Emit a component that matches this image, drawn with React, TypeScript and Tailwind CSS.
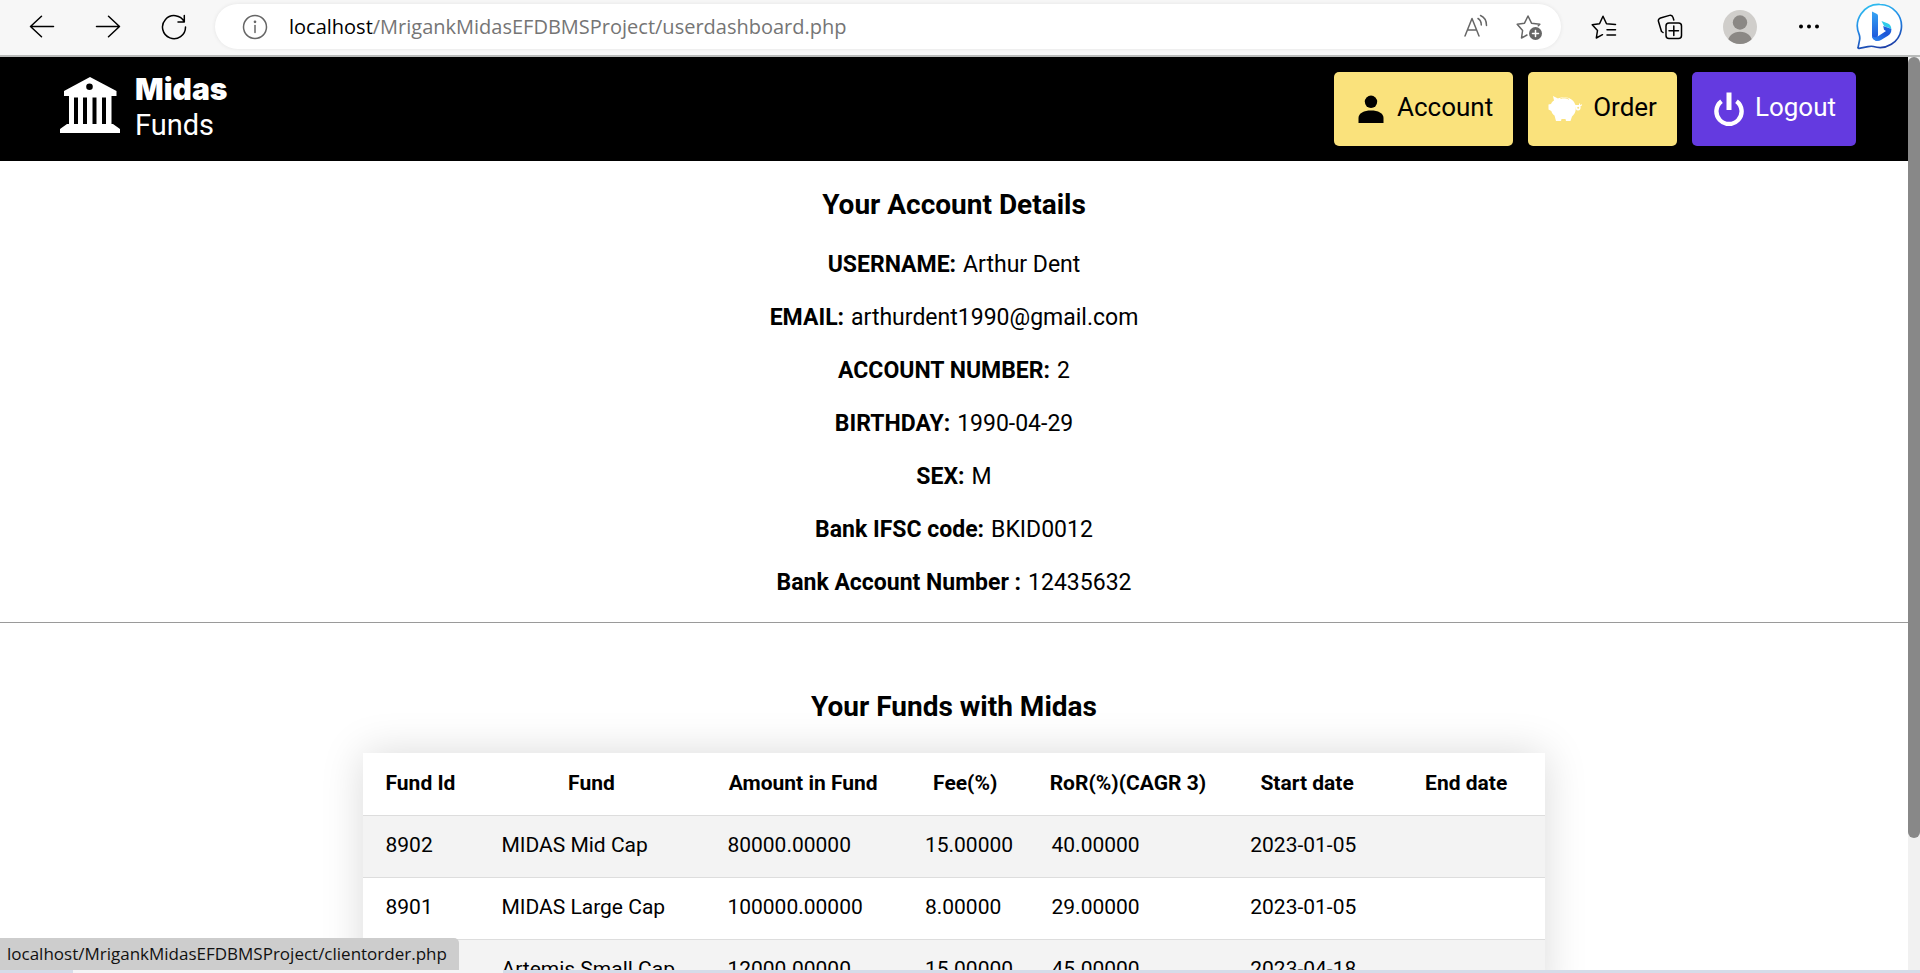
import type { ReactNode } from "react";

const details: [string, string][] = [
  ["USERNAME:", "Arthur Dent"],
  ["EMAIL:", "arthurdent1990@gmail.com"],
  ["ACCOUNT NUMBER:", "2"],
  ["BIRTHDAY:", "1990-04-29"],
  ["SEX:", "M"],
  ["Bank IFSC code:", "BKID0012"],
  ["Bank Account Number :", "12435632"],
];

const columns: [string, string][] = [
  ["Fund Id", "w-[9.8%]"],
  ["Fund", "w-[19.1%]"],
  ["Amount in Fund", "w-[16.7%]"],
  ["Fee(%)", "w-[10.7%]"],
  ["RoR(%)(CAGR 3)", "w-[16.8%]"],
  ["Start date", "w-[13.5%]"],
  ["End date", "w-[13.4%]"],
];

const funds: string[][] = [
  ["8902", "MIDAS Mid Cap", "80000.00000", "15.00000", "40.00000", "2023-01-05", ""],
  ["8901", "MIDAS Large Cap", "100000.00000", "8.00000", "29.00000", "2023-01-05", ""],
  ["", "Artemis Small Cap", "12000.00000", "15.00000", "45.00000", "2023-04-18", ""],
];

function Line({ children }: { children: ReactNode }) {
  return (
    <svg
      viewBox="0 0 26 26"
      className="size-[26px]"
      fill="none"
      stroke="currentColor"
      strokeWidth="1.5"
      strokeLinecap="round"
      strokeLinejoin="round"
      aria-hidden="true"
    >
      {children}
    </svg>
  );
}

function BingLogo() {
  return (
    <svg viewBox="0 0 48 48" className="size-12" aria-hidden="true">
      <defs>
        <linearGradient id="ring" x1="0.2" y1="0" x2="0.5" y2="1">
          <stop offset="0" stopColor="#2fc0f0" />
          <stop offset="0.5" stopColor="#2287e6" />
          <stop offset="1" stopColor="#1d3fa8" />
        </linearGradient>
        <linearGradient id="stem" x1="0" y1="0" x2="0" y2="1">
          <stop offset="0" stopColor="#36a5f4" />
          <stop offset="1" stopColor="#1d4fd8" />
        </linearGradient>
        <linearGradient id="bowl" x1="0" y1="1" x2="1" y2="0">
          <stop offset="0" stopColor="#2f8df5" />
          <stop offset="0.6" stopColor="#1d55d6" />
          <stop offset="1" stopColor="#1f6be4" />
        </linearGradient>
      </defs>
      <path
        d="M24 1.500a21.500 21.500 0 1 1-6.500 42c-2-.6-3.500-.3-5.500.1l-9 1.700c-.7.100-1.100-.3-.9-1l1.600-8c.3-1.700 0-3-.4-4.500A21.500 21.500 0 0 1 24 1.500z"
        fill="#fff"
        stroke="url(#ring)"
        strokeWidth="1.700"
      />
      <path d="M16 8.500l5 2.600c.7.400 1 .9 1 1.600V32l-1 6c-3-.5-5-2.500-5-5z" fill="url(#stem)" />
      <path d="M25.500 18l6.500 2.500c2.400 1.200 3.500 3.400 3.300 6.500-.3-1-1-1.600-2-2l-4.300-1.500c-.6-.2-.9-.5-1.200-1z" fill="#2fcdea" />
      <path d="M35.300 26c.3 3-1 5.500-3.300 6.800l-7 4.200c-3.600 2.200-8 .6-9-4 1.500 1.500 3.800 1.600 5.700.4l8.300-5.400-2-1.300-.8-3.700 5.600 1.900c1.200.2 2 .5 2.500 1.100z" fill="url(#bowl)" />
    </svg>
  );
}

function Toolbar() {
  return (
    <div className="flex h-[57px] shrink-0 items-center border-b-2 border-[#b9bbba] bg-[#f7f7f7] pb-0.5 pl-[29px] pr-4 text-black">
      <div className="flex gap-10">
        <button type="button" aria-label="Back">
          <Line><path d="M24.500 12.500H1.500M12.500 2.200L1.500 12.500l11 10.300" /></Line>
        </button>
        <button type="button" aria-label="Forward">
          <Line><path d="M1.500 12.500h23M13.500 2.200l11 10.300-11 10.300" /></Line>
        </button>
        <button type="button" aria-label="Refresh">
          <Line><path d="M23.300 8A11.500 11.500 0 1 0 24.500 13M23.300 1.500V8H17" /></Line>
        </button>
      </div>
      <div className="ml-7 flex h-[45px] flex-1 items-center rounded-full bg-white pl-[27px] pr-[19px] text-[#666] shadow-[0_0_4px_rgba(0,0,0,0.08)]">
        <Line><circle cx="13" cy="13" r="11.500" /><path d="M13 11.500v7" /><circle cx="13" cy="7.800" r=".6" fill="currentColor" /></Line>
        <p className="ml-[21px] flex-1 font-['Open_Sans',sans-serif] text-[20px] leading-7 text-[#757575]">
          <span className="text-black">localhost</span>/MrigankMidasEFDBMSProject/userdashboard.php
        </p>
        <button type="button" aria-label="Read aloud">
          <Line><path d="M2 22L9 4.500l7 17.500M4.500 16h9M15 4.500c2 1.200 3.300 3.300 3.300 6.500M17.500 1.500c3.800 1.600 6 5 6 10" /></Line>
        </button>
        <button type="button" aria-label="Add to favourites" className="ml-[27px]">
          <Line>
            <path d="M11 21l-5.500 3 1.100-7.500L1.200 10.300l7.300-1.100L12 2l3.500 7.200 8.300 1.100-1.500 1.500" />
            <circle cx="19.500" cy="19.500" r="6.500" fill="currentColor" stroke="none" />
            <path d="M19.500 16.500v6M16.500 19.500h6" stroke="#fff" />
          </Line>
        </button>
      </div>
      <div className="ml-[30px] flex items-center">
        <button type="button" aria-label="Favourites">
          <Line><path d="M11.500 20.700l-6.200 3.300 1.200-7.500L1.200 10.800l7.300-1.100L12 2.300l3.500 7.400 9 .8M16 15.800h8.500M16 21h8.500" /></Line>
        </button>
        <button type="button" aria-label="Collections" className="ml-10">
          <Line>
            <rect x="9" y="9" width="15.500" height="15.500" rx="3" />
            <path d="M16.800 12v9.500M12 16.800h9.500M6 18.500L4.500 17.500 1.500 7.500c-.5-1.600.4-3 2-3.500l9-2.600c1.800-.5 3 .3 3.500 2l.8 2.600" />
          </Line>
        </button>
        <button type="button" aria-label="Profile" className="ml-10">
          <svg viewBox="0 0 34 34" className="size-[34px]" aria-hidden="true">
            <clipPath id="avatar"><circle cx="17" cy="17" r="17" /></clipPath>
            <g clipPath="url(#avatar)">
              <rect width="34" height="34" fill="#d0cecb" />
              <circle cx="17" cy="12.500" r="7.200" fill="#8b8885" />
              <path d="M4 34c1-8 6-12.200 13-12.200S29 26 30 34z" fill="#8b8885" />
            </g>
          </svg>
        </button>
        <button type="button" aria-label="Settings and more" className="ml-[39px]">
          <Line>
            <g fill="currentColor" stroke="none"><circle cx="5" cy="12.500" r="2" /><circle cx="13" cy="12.500" r="2" /><circle cx="21" cy="12.500" r="2" /></g>
          </Line>
        </button>
        <button type="button" aria-label="Bing chat" className="ml-[34px]">
          <BingLogo />
        </button>
      </div>
    </div>
  );
}

function SiteHeader() {
  return (
    <header className="flex h-[104px] items-center justify-between bg-black pl-[60px] pr-[52px]">
      <a href="#home" className="flex items-center gap-[15px] pb-1 text-white">
        <svg viewBox="0 0 60 56" className="mb-1 h-14 w-[60px]" fill="currentColor" aria-hidden="true">
          <path fillRule="evenodd" d="M30 0l26.500 14v5H51.500v28H53l7 5v4H0v-4l7-5h2V19H4v-5zM29.500 6.500a3.300 3.300 0 1 0 0 6.600 3.300 3.300 0 0 0 0-6.600zM14 20.500V47h4V20.500zM23 20.500V47h4V20.500zM32.500 20.500V47h4V20.500zM42 20.500V47h4V20.500z" />
        </svg>
        <span className="flex flex-col">
          <span className="font-['Inter',sans-serif] text-[30px] font-black leading-9">Midas</span>
          <span className="font-['Roboto',sans-serif] text-[29px] leading-9">Funds</span>
        </span>
      </a>
      <nav className="flex gap-[15px] font-['Roboto',sans-serif] text-[26px]">
        <a href="#account" className="flex h-[74px] items-center gap-[11px] rounded-[5px] bg-[#fae27c] px-5 text-black">
          <svg viewBox="0 0 32 32" className="size-8" fill="currentColor" aria-hidden="true">
            <circle cx="17" cy="8.800" r="6.200" />
            <path d="M4.500 30v-5c0-5 5.500-7.500 12.500-7.500S29.500 20 29.500 25v5z" />
          </svg>
          <span className="pb-1">Account</span>
        </a>
        <a href="#order" className="flex h-[74px] items-center gap-[11px] rounded-[5px] bg-[#fae27c] px-5 text-black">
          <svg viewBox="0 0 34 32" className="h-8 w-[34px]" fill="#fff" aria-hidden="true">
            <path d="M5 3l5 2.500C13 3.500 22 3 26 9l1.500 3H31v-1.500h1V12l2-.8v1.300L32.500 13c.5 3-.5 4.500-2.500 4.500s-2.500-2-2-4l-.3 1c.3 5-1.700 7-3.700 9L22.500 28H18l-.5-2h-4L13 28H8l-1.500-5.500C5 21.500 4 20 3.300 18L.5 16.500v-5L3 11c.5-1.500 1.500-2.500 3-3.500z" />
            <path d="M12.500 5.500c3-1 6-.8 8.500.8" fill="none" stroke="#fae27c" strokeWidth=".9" />
            <circle cx="30.200" cy="14.700" r="1" fill="#fae27c" />
          </svg>
          <span className="pb-1">Order</span>
        </a>
        <a href="#logout" className="flex h-[74px] items-center gap-[11px] rounded-[5px] bg-[#643ae0] px-5 text-white">
          <svg viewBox="0 0 32 34" className="h-[34px] w-8" fill="none" stroke="currentColor" aria-hidden="true">
            <path d="M17 .5V18" strokeWidth="5" />
            <path d="M9.500 9.300a12.600 12.600 0 1 0 15 0" strokeWidth="4.400" />
          </svg>
          <span className="pb-1">Logout</span>
        </a>
      </nav>
    </header>
  );
}

export default function App() {
  return (
    <div className="relative flex h-screen flex-col overflow-hidden bg-white">
      <Toolbar />
      <div className="flex min-h-0 flex-1">
        <main className="min-w-0 flex-1 overflow-hidden font-['Roboto',sans-serif] text-black">
          <SiteHeader />
          <section className="pt-7 text-center">
            <h2 className="text-[28px] font-bold leading-8">Your Account Details</h2>
            <dl className="mt-7 flex flex-col gap-[21px] text-[23px] leading-8">
              {details.map(([label, value]) => (
                <div key={label} className="flex justify-center gap-[7px]">
                  <dt className="font-bold">{label}</dt>
                  <dd>{value}</dd>
                </div>
              ))}
            </dl>
          </section>
          <hr className="mt-[23px] border-[#9a9a9a]" />
          <section className="flex flex-col items-center pt-[68px]">
            <h2 className="text-[28px] font-bold leading-8">Your Funds with Midas</h2>
            <table className="mt-[30px] w-[62%] table-fixed border-collapse text-[21px] leading-7 shadow-[0_0_40px_rgba(0,0,0,0.15)]">
              <thead>
                <tr className="h-[62px] border-b border-[#dddddd] bg-white">
                  {columns.map(([name, width]) => (
                    <th key={name} className={`whitespace-nowrap pb-0.5 font-bold ${width}`}>{name}</th>
                  ))}
                </tr>
              </thead>
              <tbody>
                {funds.map((row) => (
                  <tr key={row[1]} className="h-[62px] border-b border-[#dddddd] odd:bg-[#f3f3f3] even:bg-white">
                    {row.map((cell, i) => (
                      <td key={i} className="whitespace-nowrap pb-0.5 pl-[23px]">{cell}</td>
                    ))}
                  </tr>
                ))}
              </tbody>
            </table>
          </section>
        </main>
        <div className="w-3 shrink-0 bg-[#f1f1f1]">
          <div className="h-[85.5%] rounded-full bg-[#888888]" />
        </div>
      </div>
      <div className="flex h-[3px] shrink-0 bg-[#d5dce9]">
        <div className="w-[73px]" />
        <div className="w-[430px] bg-[#f4f4f6]" />
      </div>
      <div className="absolute bottom-[3px] left-0 flex h-8 items-center rounded-tr-[5px] bg-[#cdcdcd] pl-[7px] pr-3 font-['Open_Sans',sans-serif] text-[17px] text-[#111]">
        localhost/MrigankMidasEFDBMSProject/clientorder.php
      </div>
    </div>
  );
}
